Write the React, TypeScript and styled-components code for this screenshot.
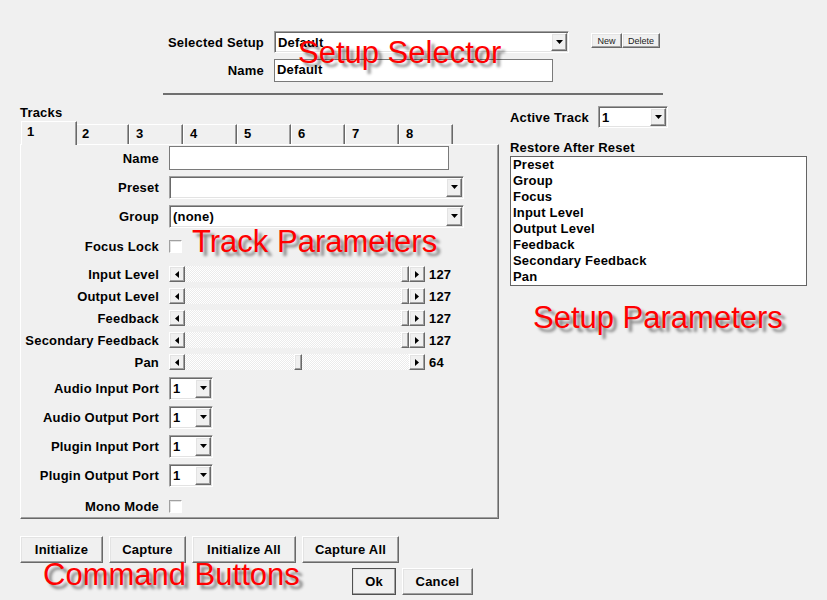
import React from "react";
import styled, { createGlobalStyle, css } from "styled-components";

const GlobalStyle = createGlobalStyle`
  html, body {
    margin: 0;
    padding: 0;
    background: #f0f0f0;
  }
  body {
    font-family: "Liberation Sans", Arial, sans-serif;
  }
`;

const raised = css`
  border: 1px solid;
  border-color: #ffffff #696969 #696969 #ffffff;
  box-shadow: inset -1px -1px 0 #a0a0a0, inset 1px 1px 0 #e3e3e3;
`;

const sunken = css`
  border: 1px solid;
  border-color: #a0a0a0 #ffffff #ffffff #a0a0a0;
  box-shadow: inset 1px 1px 0 #696969, inset -1px -1px 0 #e3e3e3;
`;

const Page = styled.div`
  position: relative;
  width: 827px;
  height: 600px;
  overflow: hidden;
  background: #f0f0f0;
  color: #000;
  font-size: 13px;
  font-weight: bold;
  letter-spacing: 0.2px;
`;

const Header = styled.div`
  padding: 31px 0 0 163px;
`;

const FormRow = styled.div<{ $mt?: number }>`
  display: flex;
  align-items: center;
  margin-top: ${(p) => p.$mt ?? 0}px;
`;

const Label = styled.span<{ $w?: number; $right?: boolean }>`
  width: ${(p) => (p.$w ? `${p.$w}px` : "auto")};
  text-align: ${(p) => (p.$right ? "right" : "left")};
  white-space: nowrap;
  line-height: 15px;
`;

const Combo = styled.div<{ $w: number; $h?: number }>`
  ${sunken}
  box-sizing: border-box;
  width: ${(p) => p.$w}px;
  height: ${(p) => p.$h ?? 23}px;
  padding: 1px;
  background: #fff;
  display: flex;
  align-items: stretch;
`;

const ComboValue = styled.span`
  flex: 1;
  display: flex;
  align-items: center;
  padding-left: 2px;
  white-space: nowrap;
  overflow: hidden;
`;

const DropButton = styled.span`
  ${raised}
  box-sizing: border-box;
  width: 16px;
  background: #f0f0f0;
  display: flex;
  align-items: center;
  justify-content: center;
`;

const TextBox = styled.div<{ $w: number; $h?: number }>`
  box-sizing: border-box;
  width: ${(p) => p.$w}px;
  height: ${(p) => p.$h ?? 24}px;
  border: 1px solid #7a7a7a;
  background: #fff;
  padding: 2px 0 0 2px;
  line-height: 15px;
`;

const SmallButtons = styled.div`
  display: flex;
  align-self: flex-start;
  margin: 2px 0 0 22px;
`;

const SmallButton = styled.button<{ $w: number }>`
  ${raised}
  box-sizing: border-box;
  width: ${(p) => p.$w}px;
  height: 15px;
  padding: 0;
  background: #f0f0f0;
  font-family: "Liberation Sans", Arial, sans-serif;
  font-size: 9px;
  font-weight: normal;
  letter-spacing: 0;
  color: #222;
`;

const Divider = styled.div`
  margin-top: 11px;
  width: 500px;
  height: 2px;
  background: #6f6f6f;
`;

const Body = styled.div`
  display: flex;
  margin-top: 11px;
  padding-left: 20px;
`;

const TracksColumn = styled.div`
  width: 479px;
`;

const TracksTitle = styled.div`
  height: 14px;
  line-height: 14px;
`;

const TabStrip = styled.div`
  display: flex;
  align-items: flex-end;
  height: 23px;
  margin-top: 1px;
  padding-left: 1px;
`;

const Tab = styled.div<{ $active?: boolean }>`
  position: relative;
  z-index: ${(p) => (p.$active ? 1 : 0)};
  box-sizing: border-box;
  width: ${(p) => (p.$active ? 56 : 54)}px;
  height: ${(p) => (p.$active ? 24 : 20)}px;
  margin-right: ${(p) => (p.$active ? -2 : 0)}px;
  margin-bottom: ${(p) => (p.$active ? -1 : 0)}px;
  padding: ${(p) => (p.$active ? "2px 0 0 5px" : "1px 0 0 6px")};
  background: #f0f0f0;
  border-top: 1px solid #fff;
  border-left: 1px solid #fff;
  border-right: 1px solid #696969;
  box-shadow: inset -1px 0 0 #a0a0a0;
  line-height: 15px;
`;

const Panel = styled.div`
  box-sizing: border-box;
  height: 375px;
  border-top: 1px solid #fff;
  border-left: 1px solid #fff;
  border-right: 1px solid #696969;
  border-bottom: 1px solid #696969;
  box-shadow: inset -1px -1px 0 #a0a0a0;
`;

const ParamRow = styled.div<{ $h: number; $mt?: number }>`
  display: grid;
  grid-template-columns: 138px auto;
  column-gap: 10px;
  align-items: center;
  height: ${(p) => p.$h}px;
  margin-top: ${(p) => p.$mt ?? 0}px;
`;

const ParamLabel = styled.span`
  text-align: right;
  white-space: nowrap;
  line-height: 15px;
`;

const Control = styled.div`
  display: flex;
  align-items: center;
`;

const CheckBox = styled.span`
  ${sunken}
  box-sizing: border-box;
  display: block;
  width: 13px;
  height: 13px;
  background: #fff;
  box-shadow: inset 1px 1px 0 #e3e3e3;
`;

const ScrollBar = styled.div`
  display: flex;
  width: 256px;
  height: 16px;
`;

const ArrowButton = styled.span`
  ${raised}
  box-sizing: border-box;
  width: 16px;
  height: 16px;
  background: #f0f0f0;
  display: flex;
  align-items: center;
  justify-content: center;
`;

const Track = styled.div`
  position: relative;
  flex: 1;
  background: repeating-conic-gradient(#ffffff 0 25%, #ebebeb 0 50%) 0 0 / 2px 2px;
`;

const Thumb = styled.span`
  ${raised}
  position: absolute;
  top: 0;
  box-sizing: border-box;
  width: 8px;
  height: 16px;
  background: #f0f0f0;
`;

const SliderValue = styled.span`
  margin-left: 4px;
  line-height: 15px;
`;

const SetupColumn = styled.div`
  margin-left: 11px;
`;

const ListTitle = styled.div`
  margin-top: 13px;
  line-height: 13px;
  height: 13px;
`;

const ListBox = styled.div`
  box-sizing: border-box;
  width: 297px;
  height: 130px;
  margin-top: 2px;
  border: 1px solid #646464;
  background: #fff;
  padding-left: 2px;
`;

const ListItem = styled.div`
  height: 16px;
  line-height: 16px;
`;

const CommandBar = styled.div`
  display: flex;
  gap: 6px;
  margin: 17px 0 0 20px;
`;

const DialogButtons = styled.div`
  display: flex;
  gap: 6px;
  margin: 5px 0 0 352px;
`;

const Button = styled.button<{ $w: number; $default?: boolean }>`
  ${raised}
  box-sizing: border-box;
  width: ${(p) => p.$w}px;
  height: 27px;
  padding: 0;
  background: #f0f0f0;
  font-family: "Liberation Sans", Arial, sans-serif;
  font-size: 13px;
  font-weight: bold;
  letter-spacing: 0.2px;
  color: #000;
  ${(p) =>
    p.$default &&
    css`
      border-color: #ffffff #404040 #404040 #ffffff;
      outline: 1px solid #505050;
      outline-offset: -1px;
    `}
`;

const Annotation = styled.div<{ $x: number; $y: number }>`
  position: absolute;
  left: ${(p) => p.$x}px;
  top: ${(p) => p.$y}px;
  font-family: "Liberation Sans", Arial, sans-serif;
  font-size: 31px;
  line-height: 31px;
  font-weight: normal;
  letter-spacing: 0;
  color: #ff0000;
  white-space: nowrap;
  text-shadow: 4px 4px 3px rgba(0, 0, 0, 0.45);
  pointer-events: none;
`;

const DownArrow = () => (
  <svg width="7" height="4" viewBox="0 0 7 4">
    <polygon points="0,0 7,0 3.5,4" fill="#000" />
  </svg>
);

const SideArrow = ({ right }: { right?: boolean }) => (
  <svg width="4" height="7" viewBox="0 0 4 7">
    <polygon points={right ? "0,0 4,3.5 0,7" : "4,0 0,3.5 4,7"} fill="#000" />
  </svg>
);

const DropDown = ({ value, w, h }: { value: string; w: number; h?: number }) => (
  <Combo $w={w} $h={h}>
    <ComboValue>{value}</ComboValue>
    <DropButton>
      <DownArrow />
    </DropButton>
  </Combo>
);

const Slider = ({ value }: { value: number }) => {
  const travel = 224 - 8;
  const left = Math.round((value / 127) * travel);
  return (
    <>
      <ScrollBar>
        <ArrowButton>
          <SideArrow />
        </ArrowButton>
        <Track>
          <Thumb style={{ left }} />
        </Track>
        <ArrowButton>
          <SideArrow right />
        </ArrowButton>
      </ScrollBar>
      <SliderValue>{value}</SliderValue>
    </>
  );
};

const sliders = [
  { label: "Input Level", value: 127 },
  { label: "Output Level", value: 127 },
  { label: "Feedback", value: 127 },
  { label: "Secondary Feedback", value: 127 },
  { label: "Pan", value: 64 },
];

const ports = [
  { label: "Audio Input Port", h: 30 },
  { label: "Audio Output Port", h: 28 },
  { label: "Plugin Input Port", h: 30 },
  { label: "Plugin Output Port", h: 28 },
];

const restoreItems = [
  "Preset",
  "Group",
  "Focus",
  "Input Level",
  "Output Level",
  "Feedback",
  "Secondary Feedback",
  "Pan",
];

export default function App() {
  return (
    <>
      <GlobalStyle />
      <Page>
        <Header>
          <FormRow>
            <Label $w={101} $right>
              Selected Setup
            </Label>
            <span style={{ width: 10 }} />
            <DropDown value="Default" w={295} h={22} />
            <SmallButtons>
              <SmallButton $w={31}>New</SmallButton>
              <SmallButton $w={38}>Delete</SmallButton>
            </SmallButtons>
          </FormRow>
          <FormRow $mt={6}>
            <Label $w={101} $right>
              Name
            </Label>
            <span style={{ width: 10 }} />
            <TextBox $w={279} $h={23}>
              Default
            </TextBox>
          </FormRow>
          <Divider />
        </Header>

        <Body>
          <TracksColumn>
            <TracksTitle>Tracks</TracksTitle>
            <TabStrip>
              {["1", "2", "3", "4", "5", "6", "7", "8"].map((t) => (
                <Tab key={t} $active={t === "1"}>
                  {t}
                </Tab>
              ))}
            </TabStrip>
            <Panel>
              <ParamRow $h={26}>
                <ParamLabel>Name</ParamLabel>
                <Control>
                  <TextBox $w={280} />
                </Control>
              </ParamRow>
              <ParamRow $h={32}>
                <ParamLabel>Preset</ParamLabel>
                <Control>
                  <DropDown value="" w={295} />
                </Control>
              </ParamRow>
              <ParamRow $h={26}>
                <ParamLabel>Group</ParamLabel>
                <Control>
                  <DropDown value="(none)" w={295} />
                </Control>
              </ParamRow>
              <ParamRow $h={34}>
                <ParamLabel>Focus Lock</ParamLabel>
                <Control>
                  <CheckBox />
                </Control>
              </ParamRow>
              {sliders.map((s) => (
                <ParamRow key={s.label} $h={22}>
                  <ParamLabel>{s.label}</ParamLabel>
                  <Control>
                    <Slider value={s.value} />
                  </Control>
                </ParamRow>
              ))}
              {ports.map((p) => (
                <ParamRow key={p.label} $h={p.h}>
                  <ParamLabel>{p.label}</ParamLabel>
                  <Control>
                    <DropDown value="1" w={44} />
                  </Control>
                </ParamRow>
              ))}
              <ParamRow $h={24} $mt={5}>
                <ParamLabel>Mono Mode</ParamLabel>
                <Control>
                  <CheckBox />
                </Control>
              </ParamRow>
            </Panel>
          </TracksColumn>

          <SetupColumn>
            <FormRow>
              <Label $w={88}>Active Track</Label>
              <DropDown value="1" w={70} h={22} />
            </FormRow>
            <ListTitle>Restore After Reset</ListTitle>
            <ListBox>
              {restoreItems.map((item) => (
                <ListItem key={item}>{item}</ListItem>
              ))}
            </ListBox>
          </SetupColumn>
        </Body>

        <CommandBar>
          <Button $w={83}>Initialize</Button>
          <Button $w={77}>Capture</Button>
          <Button $w={104}>Initialize All</Button>
          <Button $w={97}>Capture All</Button>
        </CommandBar>
        <DialogButtons>
          <Button $w={44} $default>
            Ok
          </Button>
          <Button $w={71}>Cancel</Button>
        </DialogButtons>

        <Annotation $x={298} $y={37}>Setup Selector</Annotation>
        <Annotation $x={192} $y={226}>Track Parameters</Annotation>
        <Annotation $x={533} $y={302}>Setup Parameters</Annotation>
        <Annotation $x={43} $y={559}>Command Buttons</Annotation>
      </Page>
    </>
  );
}
